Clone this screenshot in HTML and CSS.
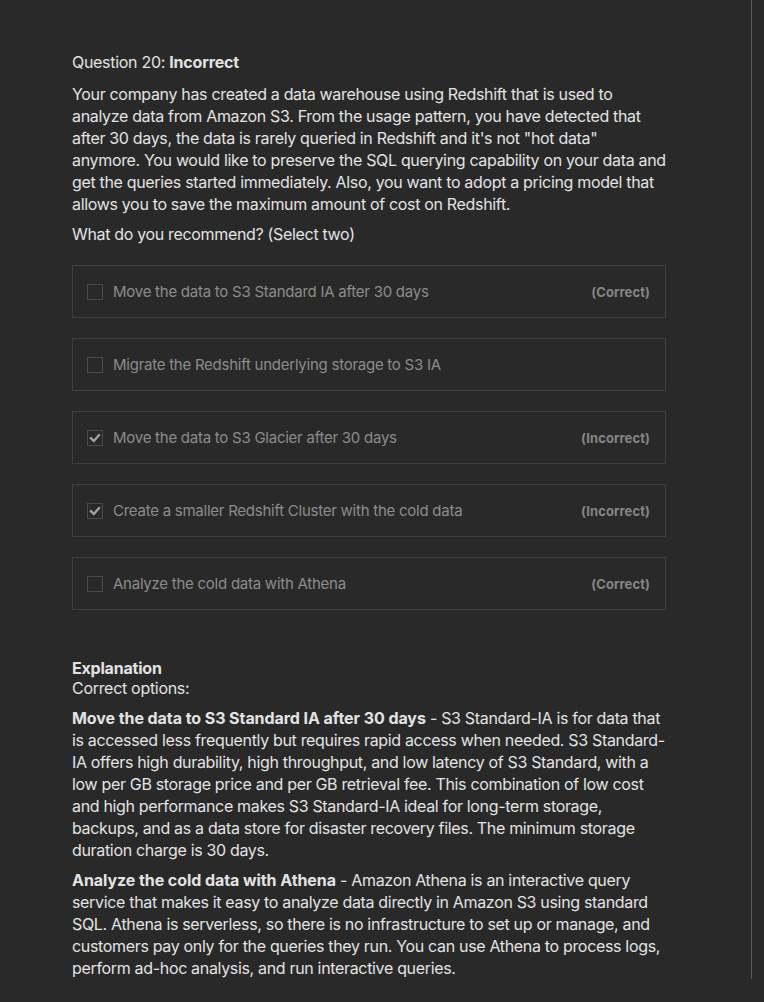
FILE: index.html
```html
<!DOCTYPE html>
<html>
<head>
<meta charset="utf-8">
<link rel="stylesheet" href="styles.css">
</head>
<body>
<div class="page">
  <div class="content">
    <div class="qtitle">Question 20: <b>Incorrect</b></div>
    <p class="qtext">Your company has created a data warehouse using Redshift that is used to analyze data from Amazon S3. From the usage pattern, you have detected that after 30 days, the data is rarely queried in Redshift and it's not "hot data" anymore. You would like to preserve the SQL querying capability on your data and get the queries started immediately. Also, you want to adopt a pricing model that allows you to save the maximum amount of cost on Redshift.</p>
    <p class="qask">What do you recommend? (Select two)</p>
    <div class="options">
      <div class="option">
        <span class="box"></span>
        <span class="otext">Move the data to S3 Standard IA after 30 days</span>
        <span class="tag">(Correct)</span>
      </div>
      <div class="option">
        <span class="box"></span>
        <span class="otext">Migrate the Redshift underlying storage to S3 IA</span>
      </div>
      <div class="option">
        <span class="box checked"><svg viewBox="0 0 14 14" width="14" height="14"><path d="M3 7.2 L5.8 10 L11 4.2" fill="none" stroke="#a0a0a0" stroke-width="2.4" stroke-linecap="square"/></svg></span>
        <span class="otext">Move the data to S3 Glacier after 30 days</span>
        <span class="tag">(Incorrect)</span>
      </div>
      <div class="option">
        <span class="box checked"><svg viewBox="0 0 14 14" width="14" height="14"><path d="M3 7.2 L5.8 10 L11 4.2" fill="none" stroke="#a0a0a0" stroke-width="2.4" stroke-linecap="square"/></svg></span>
        <span class="otext">Create a smaller Redshift Cluster with the cold data</span>
        <span class="tag">(Incorrect)</span>
      </div>
      <div class="option">
        <span class="box"></span>
        <span class="otext">Analyze the cold data with Athena</span>
        <span class="tag">(Correct)</span>
      </div>
    </div>
    <div class="explanation">
      <div class="ehead">Explanation</div>
      <div class="esub">Correct options:</div>
      <p class="epara"><b>Move the data to S3 Standard IA after 30 days</b> - S3 Standard-IA is for data that is accessed less frequently but requires rapid access when needed. S3 Standard-IA offers high durability, high throughput, and low latency of S3 Standard, with a low per GB storage price and per GB retrieval fee. This combination of low cost and high performance makes S3 Standard-IA ideal for long-term storage, backups, and as a data store for disaster recovery files. The minimum storage duration charge is 30 days.</p>
      <p class="epara"><b>Analyze the cold data with Athena</b> - Amazon Athena is an interactive query service that makes it easy to analyze data directly in Amazon S3 using standard SQL. Athena is serverless, so there is no infrastructure to set up or manage, and customers pay only for the queries they run. You can use Athena to process logs, perform ad-hoc analysis, and run interactive queries.</p>
    </div>
  </div>
  <div class="rail"></div>
</div>
</body>
</html>
```

FILE: styles.css
```css
html, body {
  margin: 0;
  padding: 0;
  background: #292929;
}
body {
  font-family: Inter, "Noto Sans", sans-serif;
  color: #e3e3e3;
  height: 1002px;
  overflow: hidden;
}
.page {
  display: flex;
  height: 1002px;
}
.content {
  width: 594px;
  padding: 51px 0 0 72px;
}
.rail {
  margin-left: 85px;
  width: 1px;
  height: 979px;
  background: #5a5a5a;
}
.qtitle {
  font-size: 16px;
  line-height: 22px;
  letter-spacing: -0.3px;
}
.qtitle b { font-weight: 700; letter-spacing: -0.15px; }
p { margin: 0; }
.qtext {
  margin-top: 10px;
  font-size: 16px;
  line-height: 22px;
  letter-spacing: -0.33px;
}
.qask {
  margin-top: 8px;
  font-size: 16px;
  line-height: 22px;
  letter-spacing: -0.33px;
}
.options {
  margin-top: 20px;
  display: flex;
  flex-direction: column;
  gap: 20px;
}
.option {
  height: 51px;
  border: 1px solid #3f3f3f;
  display: flex;
  align-items: center;
  padding: 0 15px 0 14px;
}
.box {
  width: 14px;
  height: 14px;
  border: 1px solid #4a4a4a;
  flex: none;
  display: flex;
  align-items: center;
  justify-content: center;
}
.box svg { width: 14px; height: 14px; }
.otext {
  margin-left: 10px;
  font-size: 15px;
  color: #8c8c8c;
  flex: 1;
  letter-spacing: -0.25px;
}
.tag {
  font-size: 13px;
  font-weight: 700;
  color: #858585;
  letter-spacing: 0.1px;
}
.explanation {
  margin-top: 48px;
}
.ehead {
  font-size: 16px;
  font-weight: 700;
  line-height: 20px;
  letter-spacing: -0.2px;
}
.esub {
  font-size: 16px;
  line-height: 20px;
  letter-spacing: -0.3px;
}
.epara {
  margin-top: 9px;
  font-size: 16px;
  line-height: 22px;
  letter-spacing: -0.33px;
}
.epara + .epara { margin-top: 8px; }
.epara b { font-weight: 700; letter-spacing: -0.07px; }
```
